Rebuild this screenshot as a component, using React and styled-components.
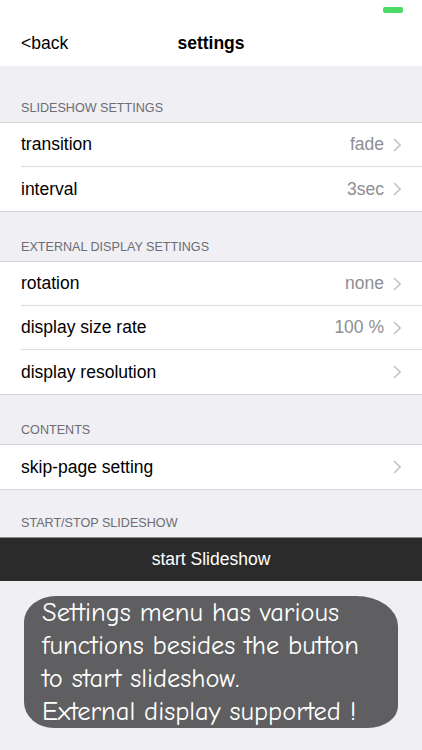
import React from "react";
import styled, { createGlobalStyle } from "styled-components";

const GlobalStyle = createGlobalStyle`
  html, body {
    margin: 0;
    padding: 0;
    background: #efeff4;
  }
  body {
    font-family: "Liberation Sans", Arial, sans-serif;
    -webkit-font-smoothing: antialiased;
  }
`;

const Screen = styled.div`
  width: 422px;
  height: 750px;
  background: #efeff4;
  overflow: hidden;
`;

const TopBar = styled.div`
  background: #fff;
  height: 66px;
  display: flex;
  flex-direction: column;
`;

const StatusBar = styled.div`
  height: 22px;
  display: flex;
  justify-content: flex-end;
  align-items: flex-start;
  padding: 7px 19px 0 0;
  box-sizing: border-box;
`;

const Battery = styled.div`
  width: 20px;
  height: 6px;
  border-radius: 2px;
  background: #4cd964;
`;

const NavBar = styled.div`
  flex: 1;
  display: grid;
  grid-template-columns: 1fr auto 1fr;
  align-items: center;
  padding: 0 21px 2px;
  font-size: 17.5px;
  color: #000;
`;

const BackLink = styled.span`
  justify-self: start;
`;

const Title = styled.span`
  font-weight: bold;
`;

const SectionHead = styled.div`
  height: ${(p) => p.h}px;
  display: flex;
  align-items: flex-end;
  box-sizing: border-box;
  padding: 0 21px 7px;
  font-size: 12.6px;
  color: #6d6d72;
`;

const Group = styled.div`
  background: #fff;
  border-top: 1px solid #d6d6da;
  border-bottom: 1px solid #d6d6da;
`;

const Row = styled.div`
  height: 44px;
  box-sizing: border-box;
  display: flex;
  align-items: center;
  margin-left: 21px;
  padding-right: 21px;
  font-size: 17.5px;
  color: #000;
  border-bottom: ${(p) => (p.last ? "none" : "1px solid #dcdce0")};
`;

const Label = styled.span`
  flex: 1;
`;

const Value = styled.span`
  color: #8e8e93;
  margin-right: 9px;
`;

const Chevron = () => (
  <svg width="8" height="14" viewBox="0 0 8 14">
    <path d="M1 1 L7 7 L1 13" fill="none" stroke="#c4c4c8" strokeWidth="1.6" />
  </svg>
);

const StartButton = styled.div`
  height: 44px;
  background: #2b2b2b;
  border-top: 1px solid #8a8a8e;
  box-sizing: border-box;
  display: flex;
  align-items: center;
  justify-content: center;
  color: #fff;
  font-size: 17.5px;
`;

const Bubble = styled.div`
  margin: 15px 0 0 24px;
  width: 374px;
  height: 132px;
  box-sizing: border-box;
  background: #5f5f61;
  border-radius: 32px 42px 30px 30px / 26px 30px 22px 26px;
  padding: 0 0 0 18px;
  color: #fff;
  font-family: "Comic Sans MS", "Comic Neue", "DejaVu Sans", sans-serif;
  font-size: 26.5px;
  line-height: 33px;
  white-space: nowrap;
`;

const sections = [
  {
    title: "SLIDESHOW SETTINGS",
    h: 56,
    rows: [
      { label: "transition", value: "fade" },
      { label: "interval", value: "3sec" },
    ],
  },
  {
    title: "EXTERNAL DISPLAY SETTINGS",
    h: 49,
    rows: [
      { label: "rotation", value: "none" },
      { label: "display size rate", value: "100 %" },
      { label: "display resolution", value: "" },
    ],
  },
  {
    title: "CONTENTS",
    h: 49,
    rows: [{ label: "skip-page setting", value: "" }],
  },
];

const App = () => {
  return (
    <>
      <GlobalStyle />
      <Screen>
        <TopBar>
          <StatusBar>
            <Battery />
          </StatusBar>
          <NavBar>
            <BackLink>&lt;back</BackLink>
            <Title>settings</Title>
            <span />
          </NavBar>
        </TopBar>

        {sections.map((s) => (
          <React.Fragment key={s.title}>
            <SectionHead h={s.h}>{s.title}</SectionHead>
            <Group>
              {s.rows.map((r, i) => (
                <Row key={r.label} last={i === s.rows.length - 1}>
                  <Label>{r.label}</Label>
                  {r.value && <Value>{r.value}</Value>}
                  <Chevron />
                </Row>
              ))}
            </Group>
          </React.Fragment>
        ))}

        <SectionHead h={47}>START/STOP SLIDESHOW</SectionHead>
        <StartButton>start Slideshow</StartButton>

        <Bubble>
          Settings menu has various
          <br />
          functions besides the button
          <br />
          to start slideshow.
          <br />
          External display supported !
        </Bubble>
      </Screen>
    </>
  );
};

export default App;
